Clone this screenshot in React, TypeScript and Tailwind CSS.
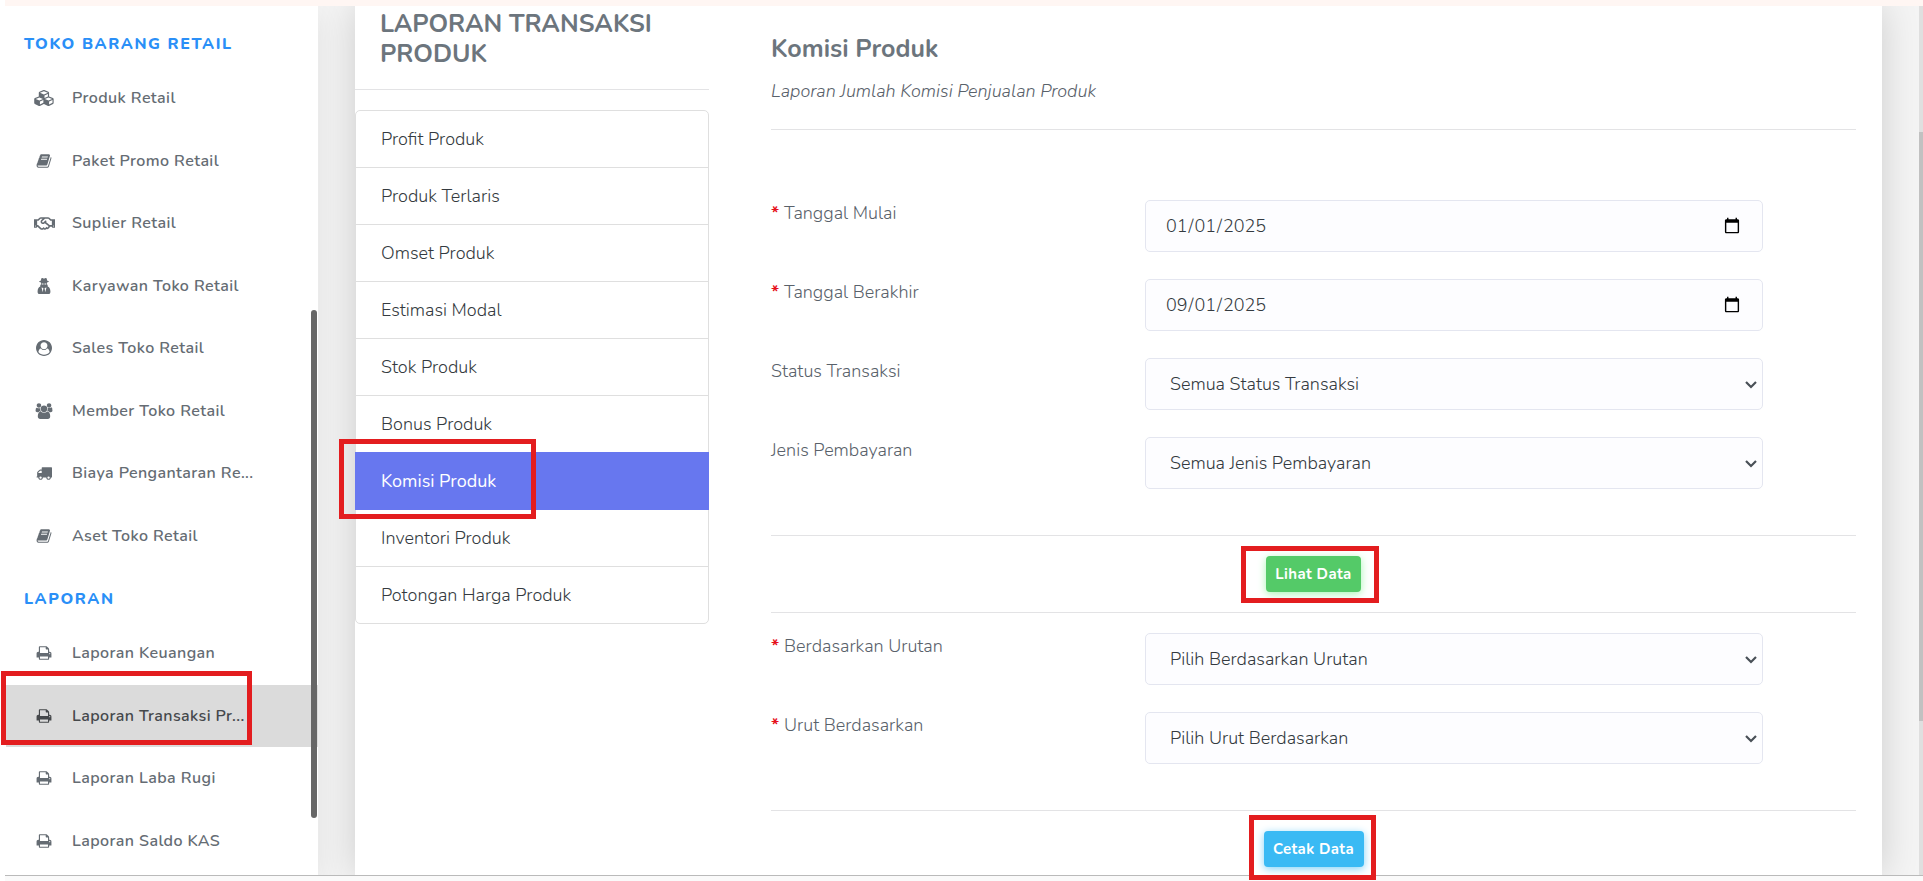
import React, { useState } from 'react';
import { FaRegHandshake } from 'react-icons/fa';

interface IconProps {
  className?: string;
}

const CubesIcon: React.FC<IconProps> = ({ className }) => (
  <svg viewBox="0 0 2304 1792" fill="currentColor" className={className}>
    <path d="M640 1632l384-192v-314l-384 164v342zm-64-454l404-173-404-173-404 173zm1088 454l384-192v-314l-384 164v342zm-64-454l404-173-404-173-404 173zm-448-293l384-165v-266l-384 164v267zm-64-379l441-189-441-189-441 189zm1088 518v416q0 36-19 67t-52 47l-448 224q-25 14-57 14t-57-14l-448-224q-5-2-7-4-2 2-7 4l-448 224q-25 14-57 14t-57-14l-448-224q-33-16-52-47t-19-67v-416q0-38 21.500-70t56.500-48l434-186v-400q0-38 21.500-70t56.500-48l448-192q23-10 50-10t50 10l448 192q35 16 56.500 48t21.500 70v400l434 186q36 16 57 48t21 70z" />
  </svg>
);

const BookIcon: React.FC<IconProps> = ({ className }) => (
  <svg viewBox="0 0 1792 1792" fill="currentColor" className={className}>
    <path d="M1703 478q40 57 18 129l-275 906q-19 64-76.500 107.500t-122.500 43.500h-923q-77 0-148.500-53.500t-99.500-131.500q-24-67-2-127 0-4 3-27t4-37q1-8-3-21.500t-3-19.500q2-11 8-21t16.500-23.500 16.500-23.500q23-38 45-91.500t30-91.500q3-10 .5-30t-.5-28q3-11 17-28t17-23q21-36 42-92t25-90q1-9-2.500-32t.5-28q4-13 22-30.500t22-22.500q19-26 42.500-84.500t27.500-96.500q1-8-3-25.500t-2-26.500q2-8 9-18t18-23 17-21q8-12 16.500-30.500t15-35 16-36 19.500-32 26.500-23.500 36-11.500 47.500 5.500l-1 3q38-9 51-9h761q74 0 114 56t18 130l-274 906q-36 119-71.500 153.500t-128.500 34.500h-869q-27 0-38 15-11 16-1 43 24 70 144 70h923q29 0 56-15.500t35-41.500l300-987q7-22 5-57 38 15 59 43zm-1064 2q-4 13 2 22.500t20 9.500h608q13 0 25.500-9.500t16.500-22.500l21-64q4-13-2-22.500t-20-9.500h-608q-13 0-25.500 9.500t-16.500 22.500zm-83 256q-4 13 2 22.500t20 9.500h608q13 0 25.500-9.500t16.500-22.500l21-64q4-13-2-22.500t-20-9.500h-608q-13 0-25.500 9.500t-16.500 22.500z" />
  </svg>
);

const SecretIcon: React.FC<IconProps> = ({ className }) => (
  <svg viewBox="0 0 16 16" fill="currentColor" className={className}>
    <path d="M5.400.5c.4-.6 1-.5 1.500-.2.700.4 1.500.4 2.200 0 .5-.3 1.100-.4 1.500.2l.7 2.200c1.100.3 1.700.6 1.700.9 0 .4-.8.700-2 .9v1.700c.7.500.9 1.300.7 2.200 1.500.6 2.500 2 2.700 4.600.1 2-.5 3-2 3H3.600c-1.500 0-2.100-1-2-3 .2-2.600 1.200-4 2.700-4.600-.2-.9 0-1.700.7-2.200V4.500c-1.200-.2-2-.5-2-.9 0-.3.6-.6 1.700-.9L5.400.5z" />
    <path d="M5.600 5.600h1.900v.8H5.800zM8.500 5.600h1.900l-.2.8H8.500zM5.500 9.400l1.900.7-.6 4.200zM10.500 9.400l-1.900.7.6 4.200z" fill="#fff" />
  </svg>
);

const UserCircleIcon: React.FC<IconProps> = ({ className }) => (
  <svg viewBox="0 0 1792 1792" fill="currentColor" className={className}>
    <path d="M1523 1339q-22-155-87.500-257.500t-184.500-118.500q-67 74-159.500 115.500t-195.500 41.500-195.500-41.500-159.500-115.500q-119 16-184.500 118.500t-87.500 257.500q106 150 271 237.500t356 87.500 356-87.500 271-237.500zm-243-699q0-159-112.500-271.500t-271.500-112.500-271.500 112.500-112.500 271.500 112.500 271.500 271.500 112.500 271.500-112.500 112.500-271.500zm512 256q0 182-71 347.500t-190.500 286-285.500 191.500-349 71q-182 0-348-71t-286-191-191-286-71-348 71-348 191-286 286-191 348-71 348 71 286 191 191 286 71 348z" />
  </svg>
);

const UsersIcon: React.FC<IconProps> = ({ className }) => (
  <svg viewBox="0 0 2048 1792" fill="currentColor" className={className}>
    <path d="M657 896q-162 5-265 128h-134q-82 0-138-40.500t-56-118.500q0-353 124-353 6 0 43.500 21t97.500 42.500 119 21.500q67 0 133-23-5 37-5 66 0 159 81 287zm1071 637q0 120-73 189.500t-194 69.500h-874q-121 0-194-69.500t-73-189.500q0-53 3.500-103.500t14-109 26.500-108.500 43-97.500 62-81 85.500-53.500 111.500-20q10 0 43 21.500t73 48 107 48 135 21.500 135-21.500 107-48 73-48 43-21.500q61 0 111.500 20t85.500 53.500 62 81 43 97.500 26.500 108.500 14 109 3.500 103.500zm-1024-1277q0 106-75 181t-181 75-181-75-75-181 75-181 181-75 181 75 75 181zm704 384q0 159-112.500 271.500t-271.500 112.500-271.500-112.500-112.500-271.500 112.500-271.500 271.500-112.500 271.500 112.500 112.500 271.500zm576 225q0 78-56 118.500t-138 40.500h-134q-103-123-265-128 81-128 81-287 0-29-5-66 66 23 133 23 59 0 119-21.500t97.500-42.500 43.500-21q124 0 124 353zm-128-609q0 106-75 181t-181 75-181-75-75-181 75-181 181-75 181 75 75 181z" />
  </svg>
);

const TruckIcon: React.FC<IconProps> = ({ className }) => (
  <svg viewBox="0 0 1792 1792" fill="currentColor" className={className}>
    <path d="M640 1408q0-52-38-90t-90-38-90 38-38 90 38 90 90 38 90-38 38-90zm-384-512h384v-256h-158q-13 0-22 9l-195 195q-9 9-9 22v30zm1280 512q0-52-38-90t-90-38-90 38-38 90 38 90 90 38 90-38 38-90zm256-1088v1024q0 15-4 26.500t-13.500 18.500-16.500 11.500-23.500 6-22.500 2-25.500 0-22.500-.5q0 106-75 181t-181 75-181-75-75-181h-384q0 106-75 181t-181 75-181-75-75-181h-64q-3 0-22.500.5t-25.500 0-22.500-2-23.500-6-16.500-11.500-13.500-18.500-4-26.500q0-26 19-45t45-19v-320q0-8-.5-35t0-38 2.500-34.500 6.500-37 14-30.500 22.500-30l198-198q19-19 50.500-32t58.500-13h160v-192q0-26 19-45t45-19h1024q26 0 45 19t19 45z" />
  </svg>
);

const PrintIcon: React.FC<IconProps> = ({ className }) => (
  <svg viewBox="0 0 1792 1792" fill="currentColor" className={className}>
    <path d="M448 1536h896v-256h-896v256zm0-640h896v-384h-160q-40 0-68-28t-28-68v-160h-640v640zm1152 64q0-26-19-45t-45-19-45 19-19 45 19 45 45 19 45-19 19-45zm128 0v416q0 13-9.500 22.500t-22.500 9.500h-224v160q0 40-28 68t-68 28h-960q-40 0-68-28t-28-68v-160h-224q-13 0-22.500-9.500t-9.500-22.500v-416q0-79 56.500-135.500t135.500-56.500h64v-544q0-40 28-68t68-28h672q40 0 88 20t76 48l152 152q28 28 48 76t20 88v256h64q79 0 135.500 56.500t56.500 135.500z" />
  </svg>
);

interface MenuItem {
  label: string;
  icon: React.ReactNode;
  active?: boolean;
}

const retailMenu: MenuItem[] = [
  { label: 'Produk Retail', icon: <CubesIcon className="h-4 w-[21px]" /> },
  { label: 'Paket Promo Retail', icon: <BookIcon className="h-4 w-4" /> },
  { label: 'Suplier Retail', icon: <FaRegHandshake className="h-[21px] w-[21px]" /> },
  { label: 'Karyawan Toko Retail', icon: <SecretIcon className="h-4 w-4" /> },
  { label: 'Sales Toko Retail', icon: <UserCircleIcon className="h-4 w-4" /> },
  { label: 'Member Toko Retail', icon: <UsersIcon className="h-4 w-[18px]" /> },
  { label: 'Biaya Pengantaran Re...', icon: <TruckIcon className="h-4 w-4" /> },
  { label: 'Aset Toko Retail', icon: <BookIcon className="h-4 w-4" /> },
];

const laporanMenu: MenuItem[] = [
  { label: 'Laporan Keuangan', icon: <PrintIcon className="h-4 w-4" /> },
  { label: 'Laporan Transaksi Pr...', icon: <PrintIcon className="h-4 w-4" />, active: true },
  { label: 'Laporan Laba Rugi', icon: <PrintIcon className="h-4 w-4" /> },
  { label: 'Laporan Saldo KAS', icon: <PrintIcon className="h-4 w-4" /> },
];

const reports = [
  'Profit Produk',
  'Produk Terlaris',
  'Omset Produk',
  'Estimasi Modal',
  'Stok Produk',
  'Bonus Produk',
  'Komisi Produk',
  'Inventori Produk',
  'Potongan Harga Produk',
];

const MenuHeading: React.FC<{ children: React.ReactNode }> = ({ children }) => (
  <h2 className="pt-[22px] pb-[13px] pl-6 text-base leading-5 font-extrabold tracking-widest text-[#2a8ff7]">
    {children}
  </h2>
);

const MenuLink: React.FC<{ item: MenuItem }> = ({ item }) => (
  <li className="relative">
    <a
      href="#"
      className={`ml-[6px] flex h-full items-center gap-[14px] pl-6 text-base font-semibold tracking-wide ${
        item.active ? 'bg-[#dbdbdb] text-[#45484b]' : 'text-[#656c73]'
      }`}
    >
      <span className="flex w-7 shrink-0 justify-center">{item.icon}</span>
      {item.label}
    </a>
    {item.active && (
      <span className="absolute -top-[14px] left-px h-[74px] w-[251px] border-5 border-[#e31d1f]" />
    )}
  </li>
);

interface FieldProps {
  id: string;
  label: string;
  required?: boolean;
  children: React.ReactNode;
}

const Field: React.FC<FieldProps> = ({ id, label, required, children }) => (
  <div className="flex">
    <label htmlFor={id} className="w-[374px] shrink-0 leading-[26px] text-[#59616a]">
      {required && <span className="font-bold text-[#e60f1a]">* </span>}
      {label}
    </label>
    <div className="relative mr-[93px] flex-1">{children}</div>
  </div>
);

const DateField: React.FC<{ id: string; label: string; initial: string }> = ({ id, label, initial }) => {
  const [value, setValue] = useState(initial);
  return (
    <Field id={id} label={label} required>
      <input
        id={id}
        type="date"
        value={value}
        onChange={(e) => setValue(e.target.value)}
        className="block h-[52px] w-full rounded-[5px] border border-[#e4e6f0] bg-[#fdfdff] pr-[19px] pl-[19px] text-lg text-[#343a40]"
      />
    </Field>
  );
};

const SelectField: React.FC<{ id: string; label: string; placeholder: string; required?: boolean }> = ({
  id,
  label,
  placeholder,
  required,
}) => (
  <Field id={id} label={label} required={required}>
    <select
      id={id}
      className="block h-[52px] w-full appearance-none rounded-[5px] border border-[#e4e6f0] bg-[#fdfdff] px-6 text-lg text-[#343a40]"
    >
      <option>{placeholder}</option>
    </select>
    <svg
      viewBox="0 0 12 8"
      fill="none"
      stroke="currentColor"
      strokeWidth="2.2"
      className="pointer-events-none absolute top-[23px] right-[6px] h-2 w-3 text-[#495057]"
    >
      <path d="M1 1l5 5 5-5" />
    </svg>
  </Field>
);

const App: React.FC = () => {
  return (
    <div className="flex h-screen flex-col overflow-hidden bg-white font-['Nunito','Lato',sans-serif] text-lg font-light text-[#6c757d]">
      <div className="relative z-20 bg-white pl-[5px]">
        <div className="h-[6px] bg-[#fff6f3]" />
      </div>

      <div className="flex min-h-0 flex-1 bg-[#f4f4f4]">
        <aside className="relative z-10 w-[318px] shrink-0 bg-white pt-[6px] shadow-[0_8px_30px_rgba(0,0,0,0.08)]">
          <MenuHeading>TOKO BARANG RETAIL</MenuHeading>
          <ul className="grid h-[500px] auto-rows-fr">
            {retailMenu.map((item) => (
              <MenuLink key={item.label} item={item} />
            ))}
          </ul>
          <MenuHeading>LAPORAN</MenuHeading>
          <ul className="grid h-[250px] auto-rows-fr">
            {laporanMenu.map((item) => (
              <MenuLink key={item.label} item={item} />
            ))}
          </ul>
          <div className="absolute top-[304px] right-px h-[508px] w-[6px] rounded-full bg-[#666]" />
        </aside>

        <main className="mx-[37px] flex flex-1 bg-white pr-[26px] shadow-[0_0_36px_rgba(0,0,0,0.16)]">
          <nav className="w-[354px] shrink-0">
            <h1 className="border-b border-[#e3e3e5] pt-[3px] pr-6 pb-5 pl-[25px] text-[25px] leading-[30px] font-bold">
              LAPORAN TRANSAKSI PRODUK
            </h1>
            <ul className="mt-5 rounded-[5px] border border-[#dfdfdf]">
              {reports.map((report) => {
                const active = report === 'Komisi Produk';
                return (
                  <li key={report} className="group relative">
                    <a
                      href="#"
                      className={
                        active
                          ? '-mx-px -mt-px block h-[58px] bg-[#6777ef] pl-[26px] leading-[58px] font-normal text-white'
                          : 'block h-[57px] border-b border-[#dfdfdf] pl-[25px] leading-[56px] text-[#343a40] group-last:h-14 group-last:border-b-0'
                      }
                    >
                      {report}
                    </a>
                    {active && (
                      <span className="absolute -top-[13px] -left-[17px] z-10 h-20 w-[197px] border-5 border-[#e31d1f]" />
                    )}
                  </li>
                );
              })}
            </ul>
          </nav>

          <form className="ml-[62px] flex-1" onSubmit={(e) => e.preventDefault()}>
            <div className="border-b border-[#e3e3e5] pt-7 pb-[26px]">
              <h2 className="text-[25px] leading-[30px] font-bold">Komisi Produk</h2>
              <p className="mt-[15px] leading-6 text-[#59616a] italic">Laporan Jumlah Komisi Penjualan Produk</p>
            </div>

            <div className="flex flex-col gap-[27px] border-b border-[#e3e3e5] pt-[70px] pb-[46px]">
              <DateField id="tanggal-mulai" label="Tanggal Mulai" initial="2025-01-01" />
              <DateField id="tanggal-berakhir" label="Tanggal Berakhir" initial="2025-09-01" />
              <SelectField id="status-transaksi" label="Status Transaksi" placeholder="Semua Status Transaksi" />
              <SelectField id="jenis-pembayaran" label="Jenis Pembayaran" placeholder="Semua Jenis Pembayaran" />
            </div>

            <div className="flex justify-center border-b border-[#e3e3e5] py-5">
              <div className="relative">
                <button
                  type="button"
                  className="block h-9 w-[95px] rounded-[4px] bg-[#54ca68] pt-px text-[15px] font-bold tracking-wide text-white shadow-[0_2px_8px_#a8f5b4]"
                >
                  Lihat Data
                </button>
                <span className="pointer-events-none absolute -top-[10px] -left-[25px] h-[57px] w-[138px] border-5 border-[#e31d1f]" />
              </div>
            </div>

            <div className="flex flex-col gap-[27px] border-b border-[#e3e3e5] pt-5 pb-[46px]">
              <SelectField
                id="berdasarkan-urutan"
                label="Berdasarkan Urutan"
                placeholder="Pilih Berdasarkan Urutan"
                required
              />
              <SelectField
                id="urut-berdasarkan"
                label="Urut Berdasarkan"
                placeholder="Pilih Urut Berdasarkan"
                required
              />
            </div>

            <div className="flex justify-center pt-5">
              <div className="relative">
                <button
                  type="button"
                  className="block h-9 w-[100px] rounded-[4px] bg-[#3abaf4] pt-px text-[15px] font-bold tracking-wide text-white shadow-[0_2px_8px_#82d3f8]"
                >
                  Cetak Data
                </button>
                <span className="pointer-events-none absolute -top-4 -left-[15px] z-30 h-[65px] w-[127px] border-5 border-[#e31d1f]" />
              </div>
            </div>
          </form>
        </main>

        <div className="relative z-10 w-1 shrink-0 bg-[#dfdfdf] pt-[126px]">
          <div className="h-[589px] bg-[#c1c1c1]" />
        </div>
      </div>

      <div className="relative z-20 bg-white pl-[5px]">
        <div className="h-[6px] border-t border-[#bababa] bg-[#fafafa]" />
      </div>
    </div>
  );
};

export default App;
